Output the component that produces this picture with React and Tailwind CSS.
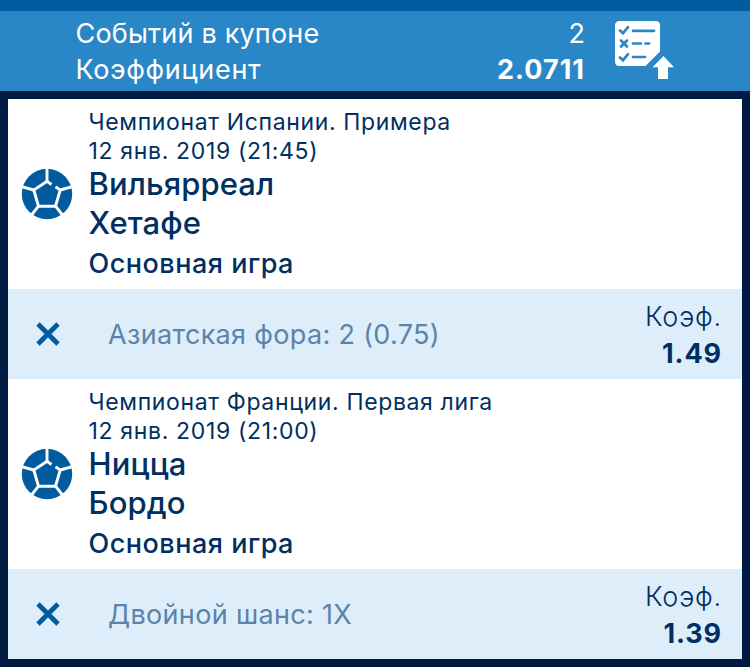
import React from 'react';

const events = [
  {
    league: 'Чемпионат Испании. Примера',
    date: '12 янв. 2019 (21:45)',
    home: 'Вильярреал',
    away: 'Хетафе',
    market: 'Азиатская фора: 2 (0.75)',
    odds: '1.49',
  },
  {
    league: 'Чемпионат Франции. Первая лига',
    date: '12 янв. 2019 (21:00)',
    home: 'Ницца',
    away: 'Бордо',
    market: 'Двойной шанс: 1X',
    odds: '1.39',
  },
];

function CouponIcon() {
  return (
    <svg viewBox="0 0 60 60" className="h-[60px] w-[60px]">
      <path d="M4.500 0H40.500Q45 0 45 4.500V30.500L30.500 45H4.500Q0 45 0 40.500V4.500Q0 0 4.500 0Z" fill="#fff" />
      <path d="M48.500 35L59 46.300H53V58H43V46.300H37.500Z" fill="#fff" />
      <g fill="none" stroke="#2a87c7" strokeWidth="2.700" strokeLinecap="round">
        <path d="M5 9.500L8 12.200L13 6.200M5 36.500L8 39.200L13 33.200" />
        <path d="M6 19.500L12 25.500M12 19.500L6 25.500" />
        <path d="M18 9.800H39M18 22.500H26M30.500 22.500H34M18 36H30" />
      </g>
    </svg>
  );
}

function BallIcon() {
  return (
    <svg viewBox="0 0 52 52" className="h-[52px] w-[52px]">
      <circle cx="26" cy="26" r="25.200" fill="#005b9f" />
      <g fill="none" stroke="#fff" strokeWidth="2.900">
        <path d="M30.500 16.500L26 13.300L12.800 22L17.500 38.200H34.500L39.200 22L34.500 18.800" />
        <path d="M26 13.300V0M39.200 22L52 18.500M34.500 38.200L41.500 47M17.500 38.200L10.500 47M12.800 22L0 18.500" />
      </g>
    </svg>
  );
}

function RemoveIcon() {
  return (
    <svg viewBox="0 0 24 24" className="h-6 w-6">
      <path d="M2 2L22 22M22 2L2 22" stroke="#005b9f" strokeWidth="4.800" />
    </svg>
  );
}

export default function App() {
  return (
    <div className="h-[667px] w-[750px] overflow-hidden bg-[#001a41] font-['Inter',sans-serif] text-[#002f61]">
      <div className="h-[11px] bg-[#005b9f]" />
      <header className="flex h-20 bg-[#2a87c7] pt-[5px] pl-[75.5px] text-[27px] leading-9 text-white">
        <div className="w-[300px]">
          <div className="tracking-[0.2px]">Событий в купоне</div>
          <div className="tracking-[0.7px]">Коэффициент</div>
        </div>
        <div className="w-[209.5px] text-right">
          <div>2</div>
          <div className="font-bold tracking-[1px]">2.0711</div>
        </div>
        <div className="pt-[5px] pl-[30px]">
          <CouponIcon />
        </div>
      </header>
      <main className="mx-2 mt-2">
        {events.map((event) => (
          <section key={event.home} className="h-[280px] bg-white">
            <div className="flex h-[190px]">
              <div className="w-20 pt-[69px] pl-[13px]">
                <BallIcon />
              </div>
              <div className="pt-[9px] pl-[0.5px]">
                <div className="text-[23px] leading-[29px] tracking-[0.64px]">{event.league}</div>
                <div className="text-[23px] leading-[29px] tracking-[0.66px]">{event.date}</div>
                <div className="text-[31px] leading-[36px] font-medium tracking-[0.1px]">{event.home}</div>
                <div className="text-[31px] leading-[41px] font-medium tracking-[0.1px]">{event.away}</div>
                <div className="text-[27px] leading-[41px] font-medium tracking-[0.5px]">Основная игра</div>
              </div>
            </div>
            <div className="flex h-[90px] items-center bg-[#deedfa] pr-5 text-[27px]">
              <div className="w-[100px] pl-7">
                <RemoveIcon />
              </div>
              <span className="flex-1 pt-0.5 tracking-[0.33px] text-[#5b84a8]">{event.market}</span>
              <div className="pt-0.5 text-right">
                <div className="leading-9 font-light tracking-[0.8px]">Коэф.</div>
                <div className="leading-[37px] font-bold tracking-[0.9px]">{event.odds}</div>
              </div>
            </div>
          </section>
        ))}
      </main>
    </div>
  );
}
